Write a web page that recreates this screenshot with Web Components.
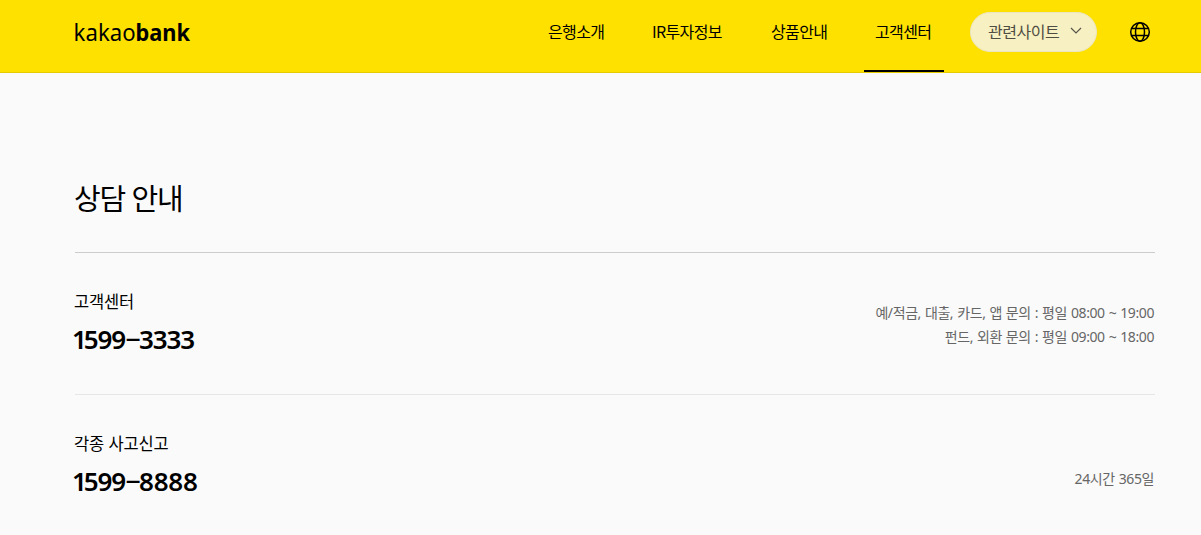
<!DOCTYPE html>
<html lang="ko">
<head>
<meta charset="utf-8">
<title>kakaobank</title>
<style>
html,body{margin:0;height:100%;overflow:hidden}
body{background:#fafafa;color:#000;font-family:"Noto Sans CJK KR","Liberation Sans",sans-serif}
</style>
</head>
<body>
<bank-page></bank-page>
<script>
const define = (name, html) => customElements.define(name, class extends HTMLElement {
  constructor() {
    super();
    this.attachShadow({ mode: 'open' }).innerHTML = html;
  }
});

define('bank-logo', `
<style>:host{display:block;width:117px;height:30px} svg{display:block;overflow:visible} text{font-family:"Noto Sans","Open Sans",sans-serif;font-size:24px}</style>
<svg width="117" height="30" viewBox="0 0 117 30">
<text x="-1.4" y="23" textLength="62" lengthAdjust="spacingAndGlyphs">kakao</text>
<text x="60.5" y="23" font-weight="700" textLength="54.5" lengthAdjust="spacingAndGlyphs">bank</text>
</svg>`);

define('nav-item', `
<style>
:host{display:flex;box-sizing:border-box;height:72px;padding:19px 12px 0;font-size:16px;line-height:24px;letter-spacing:-.65px;white-space:nowrap}
:host([active]){border-bottom:2px solid #000;width:80px;padding-left:11px}
</style><slot></slot>`);

define('site-select', `
<style>
:host{display:flex;box-sizing:border-box;width:127px;height:40px;border-radius:20px;border:1px solid #ece5c4;background:#f7f0c2;color:#4f4d43;font-size:16px;line-height:36px;letter-spacing:-.5px;padding-left:17px;white-space:nowrap}
svg{margin:13px 0 0 11px;flex:none}
</style><slot></slot><svg width="12" height="10" viewBox="0 0 12 10" fill="none" stroke="#57554a" stroke-width="1.2"><path d="M1 2l5 5 5-5"/></svg>`);

define('globe-icon', `
<style>:host{display:block;width:22px;height:22px} svg{display:block}</style>
<svg width="22" height="22" viewBox="0 0 22 22" fill="none" stroke="#000" stroke-width="1.5"><circle cx="11" cy="11" r="9.3"/><ellipse cx="11" cy="11" rx="4.5" ry="9.3"/><path d="M2.8 7.5h16.4M2.8 14.5h16.4"/></svg>`);

define('site-header', `
<style>
:host{display:flex;box-sizing:border-box;height:73px;background:#ffe100;border-bottom:1px solid #e6cb00;padding-left:75px}
bank-logo{margin-top:18px}
nav{display:grid;grid-template-columns:104px 119px 105px 80px;margin-left:344px}
site-select{margin:12px 0 0 26px}
globe-icon{margin:21px 0 0 32px}
</style>
<bank-logo></bank-logo>
<nav><nav-item>은행소개</nav-item><nav-item>IR투자정보</nav-item><nav-item>상품안내</nav-item><nav-item active>고객센터</nav-item></nav>
<site-select>관련사이트</site-select><globe-icon></globe-icon>`);

define('phone-number', `
<style>
:host{display:flex;margin-left:-3px;font-family:"Noto Sans","Noto Sans CJK KR",sans-serif;font-size:26px;line-height:38px;font-weight:600;letter-spacing:-1.1px}
.one{letter-spacing:-3.2px}
.dash{display:inline-block;width:14px;text-align:center;font-weight:500;transform:translateY(-2px) scaleX(2)}
.last{letter-spacing:var(--last-spacing,-1.1px)}
</style><span class="one"><slot name="first"></slot></span><slot name="a"></slot><span class="dash">-</span><span class="last"><slot name="b"></slot></span>`);

define('contact-row', `
<style>
:host{display:flex;box-sizing:border-box;height:142px;justify-content:space-between;border-bottom:1px solid #e6e6e6}
.l{padding-top:36px}
.t{font-size:16.5px;line-height:24px;letter-spacing:-.15px;margin-left:-1px}
.p{margin-top:7px}
.r{font-family:"Noto Sans","Noto Sans CJK KR",sans-serif;font-size:14px;line-height:24px;letter-spacing:-.4px;word-spacing:.7px;color:#666;text-align:right;padding:48px 1px 0 0}
</style>
<div class="l"><div class="t"><slot name="title"></slot></div><div class="p"><slot name="phone"></slot></div></div>
<div class="r"><slot name="hours"></slot></div>`);

define('bank-page', `
<style>
:host{display:block}
main{width:1080px;margin-left:75px}
h1{margin:0;padding-top:100px;height:79px;font-weight:400;font-size:29px;line-height:48px;letter-spacing:-1.3px;text-indent:-1px;border-bottom:1px solid #ccc}
.late{padding-top:24px}
.accident{--last-spacing:-.2px}
</style>
<site-header></site-header>
<main><h1>상담 안내</h1>
<contact-row><span slot="title">고객센터</span><phone-number slot="phone"><span slot="first">1</span><span slot="a">599</span><span slot="b">3333</span></phone-number>
<div slot="hours"><div>예/적금, 대출, 카드, 앱 문의 : 평일 08:00 ~ 19:00</div><div>펀드, 외환 문의 : 평일 09:00 ~ 18:00</div></div></contact-row>
<contact-row class="accident"><span slot="title">각종 사고신고</span><phone-number slot="phone"><span slot="first">1</span><span slot="a">599</span><span slot="b">8888</span></phone-number>
<div slot="hours" class="late">24시간 365일</div></contact-row>
</main>`);
</script>
</body>
</html>
